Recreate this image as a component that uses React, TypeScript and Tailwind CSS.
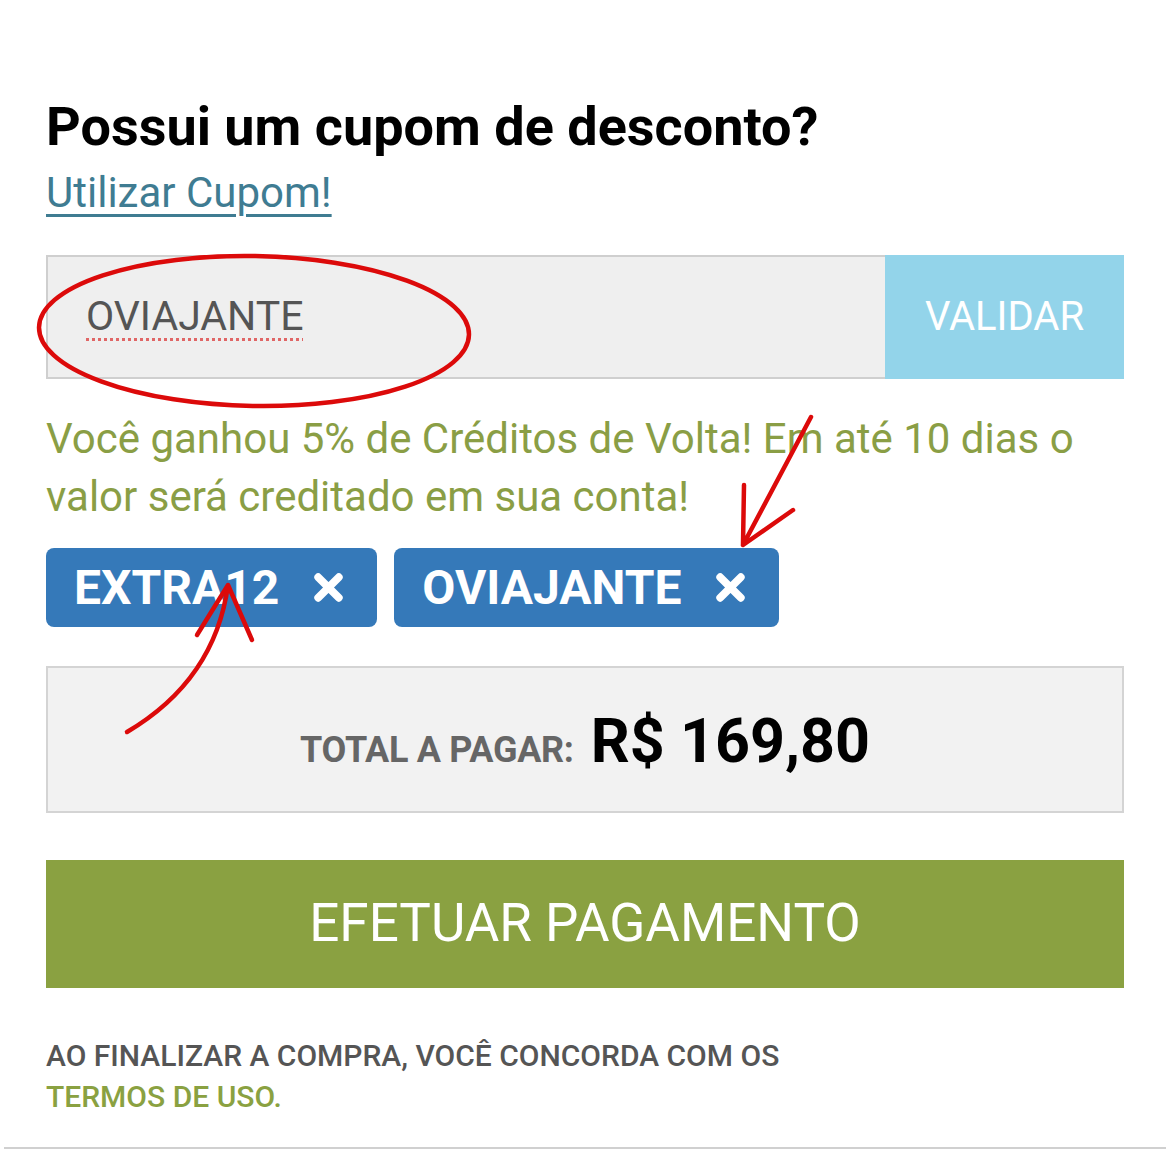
import React from "react";

function CloseIcon() {
  return (
    <svg viewBox="0 0 32 32" className="w-[33px] h-[33px]">
      <path d="M6 6 L26 26 M26 6 L6 26" stroke="#ffffff" strokeWidth="7.5" strokeLinecap="round" />
    </svg>
  );
}

function Chip({ code }: { code: string }) {
  return (
    <div className="h-[79px] rounded-[8px] bg-[#3579b9] flex items-center pl-[28px] pr-[32px] gap-[33px]">
      <span className="text-[48px] font-bold text-white leading-none">{code}</span>
      <CloseIcon />
    </div>
  );
}

export default function App() {
  return (
    <div className="relative w-[1170px] h-[1149px] bg-white font-['Roboto',sans-serif] overflow-hidden">
      <div className="px-[46px] pt-[95px]">
        <h1 className="text-[54px] leading-[64px] font-bold text-black">Possui um cupom de desconto?</h1>
        <a className="block mt-[9px] text-[42px] leading-[50px] text-[#3f7c92] underline decoration-[3px] underline-offset-[7px]">
          Utilizar Cupom!
        </a>

        <div className="mt-[37px] h-[124px] flex">
          <div className="flex-1 bg-[#efefef] border-2 border-r-0 border-[#cfcfcf] flex items-center pl-[38px]">
            <span className="text-[41px] text-[#555555] underline decoration-dotted decoration-[#e06666] decoration-[3px] underline-offset-[8px]">
              OVIAJANTE
            </span>
          </div>
          <button className="w-[239px] bg-[#93d4ea] text-white text-[40px] flex items-center justify-center">VALIDAR</button>
        </div>

        <p className="mt-[31px] text-[42px] leading-[58px] text-[#8a9e45] whitespace-nowrap">
          Você ganhou 5% de Créditos de Volta! Em até 10 dias o<br />
          valor será creditado em sua conta!
        </p>

        <div className="mt-[22px] flex gap-[17px]">
          <Chip code="EXTRA12" />
          <Chip code="OVIAJANTE" />
        </div>

        <div className="mt-[39px] h-[147px] bg-[#f2f2f2] border-2 border-[#d4d4d4] flex items-baseline justify-center pt-[28px] gap-[17px]">
          <span className="text-[36px] font-bold text-[#666666] tracking-[-0.3px]">TOTAL A PAGAR:</span>
          <span className="text-[61px] font-bold text-black">R$ 169,80</span>
        </div>

        <button className="mt-[47px] w-full h-[128px] bg-[#8aa141] text-white text-[53px] flex items-center justify-center">
          EFETUAR PAGAMENTO
        </button>

        <div className="mt-[47px] text-[30px] leading-[41px] font-medium">
          <p className="text-[#555555]">AO FINALIZAR A COMPRA, VOCÊ CONCORDA COM OS</p>
          <p className="text-[#8aa141]">TERMOS DE USO.</p>
        </div>
      </div>
      <div className="mx-[4px] mt-[30px] h-[2px] bg-[#d0d0d0]" />

      <svg className="absolute inset-0 pointer-events-none" width="1170" height="1149" viewBox="0 0 1170 1149">
        <ellipse cx="254" cy="331" rx="215" ry="75" transform="rotate(1 254 331)" fill="none" stroke="#dc0a0a" strokeWidth="4.5" />
        <path d="M811 417 L743 545 M744 485 L743 545 L793 510" fill="none" stroke="#dc0a0a" strokeWidth="4.5" strokeLinecap="round" strokeLinejoin="round" />
        <path d="M127 732 Q215 680 228 585 M197 635 L228 585 L252 640" fill="none" stroke="#dc0a0a" strokeWidth="4.5" strokeLinecap="round" strokeLinejoin="round" />
      </svg>
    </div>
  );
}
